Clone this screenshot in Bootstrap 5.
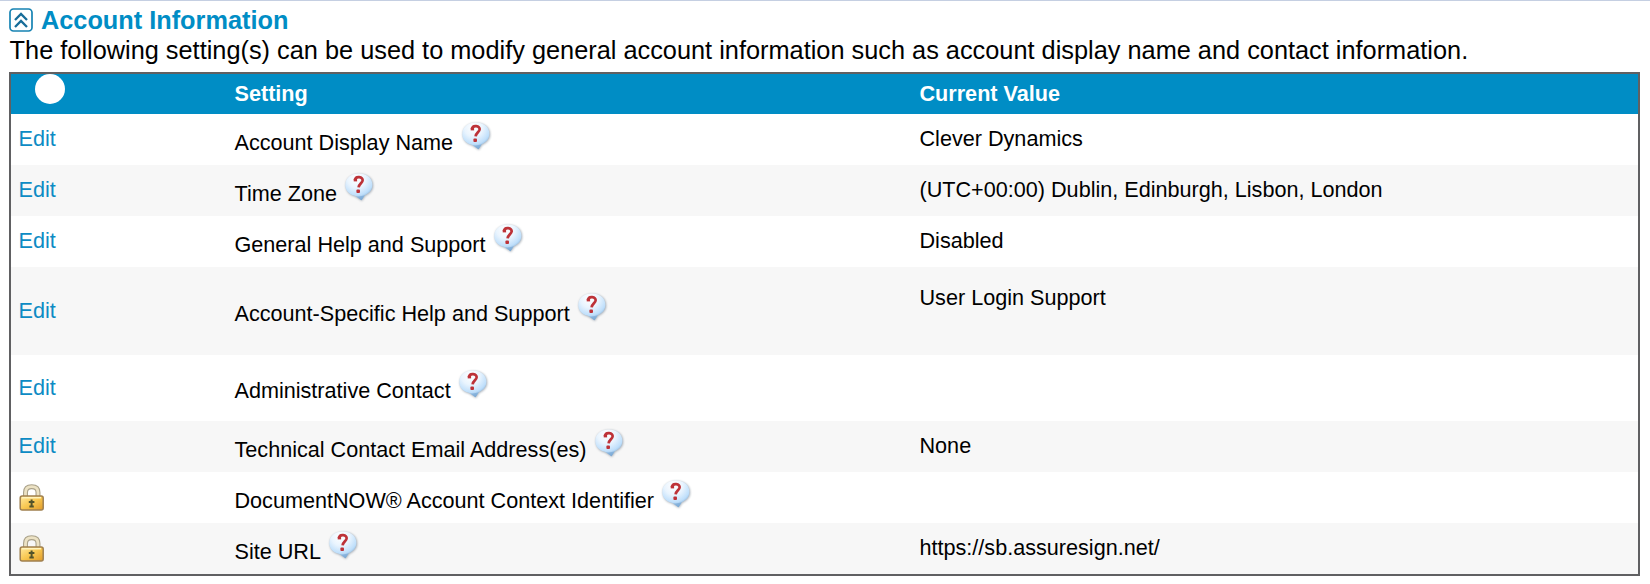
<!DOCTYPE html>
<html lang="en">
<head>
<meta charset="utf-8">
<title>Account Information</title>
<link href="https://cdn.jsdelivr.net/npm/bootstrap@5.3.0/dist/css/bootstrap.min.css" rel="stylesheet">
<style>
body{font-family:"Liberation Sans",Arial,sans-serif;color:#000;background:#fff;border-top:1px solid #c5cfe2;height:584px;overflow:hidden}
.panel{padding:4px 10px 0 9px}
.panel-title{font-size:25.3px;line-height:30px;color:#008dc5;gap:8px}
.panel-text{font-size:25.33px;line-height:31px;padding-left:.6px;margin-bottom:6px;white-space:nowrap}
.settings{border:2px solid #606062;font-size:21.62px;line-height:24px;table-layout:fixed;border-collapse:separate;border-spacing:0;width:1631px}
.settings th,.settings td{padding:0 0 2px 7.5px;border:0;vertical-align:middle;white-space:nowrap;box-shadow:none;color:#000}
.settings thead th{background:#008dc5;color:#fff;height:40px;padding-bottom:0}
.settings tbody tr{height:51px}
.settings tbody tr:nth-child(even) td{background:#f7f7f7}
.settings tbody tr.tall{height:88px}
.settings tbody tr.mid{height:66px}
.settings td.name{padding-bottom:4px}
.settings .tall td.name,.settings .mid td.name{padding-bottom:6px}
.settings .tall td:first-child,.settings .mid td:first-child{padding-bottom:0}
.c1{width:216px}.c2{width:685px}
.settings a{color:#0d8bc4;text-decoration:none}
.name svg{width:30px;height:30px;margin-left:7.500px;vertical-align:baseline;overflow:visible}
.dot{width:30px;height:30px;margin:0 0 10px 16.500px;background:#fff}
.lock{display:block;margin-top:2px}
</style>
</head>
<body>
<svg width="0" height="0" class="position-absolute">
<defs>
<radialGradient id="bub" cx=".42" cy=".2" r=".85"><stop offset="0" stop-color="#fff"/><stop offset=".4" stop-color="#e9f4fe"/><stop offset=".72" stop-color="#bfdffb"/><stop offset="1" stop-color="#6f9cc8"/></radialGradient>
<linearGradient id="gold" x1="0" y1="0" x2="1" y2="1"><stop offset="0" stop-color="#ffe9a0"/><stop offset=".5" stop-color="#f8c750"/><stop offset="1" stop-color="#e09a28"/></linearGradient>
<filter id="soft" x="-20%" y="-20%" width="140%" height="140%"><feGaussianBlur stdDeviation=".9"/></filter>
<filter id="smooth" x="-10%" y="-10%" width="120%" height="120%"><feGaussianBlur stdDeviation=".35"/></filter>
<symbol id="help" viewBox="0 -1 30 30" overflow="visible">
<path d="M1.800 13.500C1.800 6 8 2 15.500 2S29.200 6 29.200 13.500c0 5.500-3.700 8.500-8 10.500L18 29 11 24.500C5 23 1.800 19 1.800 13.500z" fill="#6c7a89" opacity=".6" filter="url(#soft)"/>
<path d="M1.300 13C1.300 5.500 7.300 1.400 14.800 1.400S28.400 5.500 28.400 12.800c0 5.500-3.500 8.700-7.700 10.500L17.500 28.200 11.500 24C5 22.500 1.300 18.500 1.300 13z" fill="url(#bub)"/>
<path d="M12 24.200L17.500 28.200l3.200-4.900c-2.500 1-5.500 1.400-8.700.9z" fill="#7ba9d6" opacity=".7"/>
<g filter="url(#smooth)">
<path d="M11 8.200C11.300 5.700 13.200 5 15.200 5.200c2.500.2 3.700 1.600 3.400 3.500-.3 2.400-3.600 3.100-4 6.700" fill="none" stroke="#bd3238" stroke-width="2.700"/>
<path d="M9.700 6.800h3.400v2.600H9.700z" fill="#bd3238"/>
<rect x="12.400" y="17.600" width="3.600" height="3.300" rx="1" fill="#bd3238"/>
</g>
</symbol>
<symbol id="padlock" viewBox="0 0 26 28">
<g filter="url(#smooth)">
<path d="M6.500 14V8.500C6.500 4.500 9 2.700 12.700 2.700S19 4.500 19 8.500V14" fill="none" stroke="#aaa28a" stroke-width="5"/>
<path d="M6.500 14V8.500C6.500 4.500 9 2.700 12.700 2.700S19 4.500 19 8.500V14" fill="none" stroke="#ece2c4" stroke-width="2.800"/>
<rect x="1.200" y="12" width="23" height="14" rx="2" fill="url(#gold)" stroke="#a08050" stroke-width="1.500"/>
<path d="M3 13.700h19" stroke="#fff3bd" stroke-width="1.500"/>
<path d="M12.600 15.500v7M9.800 18h5.600M10.400 22.500h4.400" stroke="#52522c" stroke-width="2" fill="none"/>
</g>
</symbol>
</defs>
</svg>
<main class="panel">
<h1 class="panel-title d-flex align-items-center fw-bold mb-0">
<svg width="24" height="24" viewBox="0 0 24 24" fill="none"><rect x="1" y="1" width="22" height="22" rx="3.500" fill="#fff" stroke="#1683b3" stroke-width="1.700"/><path d="M6 12l6-6 6 6M6 19l6-6 6 6" stroke="#176d99" stroke-width="2.300"/></svg>
<span>Account Information</span></h1>
<p class="panel-text">The following setting(s) can be used to modify general account information such as account display name and contact information.</p>
<table class="table settings mb-0">
<colgroup><col class="c1"><col class="c2"><col></colgroup>
<thead><tr><th><div class="dot rounded-circle"></div></th><th>Setting</th><th>Current Value</th></tr></thead>
<tbody>
<tr><td><a href="#">Edit</a></td><td class="name">Account Display Name<svg><use href="#help"/></svg></td><td>Clever Dynamics</td></tr>
<tr><td><a href="#">Edit</a></td><td class="name">Time Zone<svg><use href="#help"/></svg></td><td>(UTC+00:00) Dublin, Edinburgh, Lisbon, London</td></tr>
<tr><td><a href="#">Edit</a></td><td class="name">General Help and Support<svg><use href="#help"/></svg></td><td>Disabled</td></tr>
<tr class="tall"><td><a href="#">Edit</a></td><td class="name">Account-Specific Help and Support<svg><use href="#help"/></svg></td><td>User Login Support<br>&nbsp;</td></tr>
<tr class="mid"><td><a href="#">Edit</a></td><td class="name">Administrative Contact<svg><use href="#help"/></svg></td><td></td></tr>
<tr><td><a href="#">Edit</a></td><td class="name">Technical Contact Email Address(es)<svg><use href="#help"/></svg></td><td>None</td></tr>
<tr><td><svg class="lock" width="26" height="28"><use href="#padlock"/></svg></td><td class="name">DocumentNOW® Account Context Identifier<svg><use href="#help"/></svg></td><td></td></tr>
<tr><td><svg class="lock" width="26" height="28"><use href="#padlock"/></svg></td><td class="name">Site URL<svg><use href="#help"/></svg></td><td>https://sb.assuresign.net/</td></tr>
</tbody>
</table>
</main>
<script src="https://cdn.jsdelivr.net/npm/bootstrap@5.3.0/dist/js/bootstrap.bundle.min.js"></script>
</body>
</html>
